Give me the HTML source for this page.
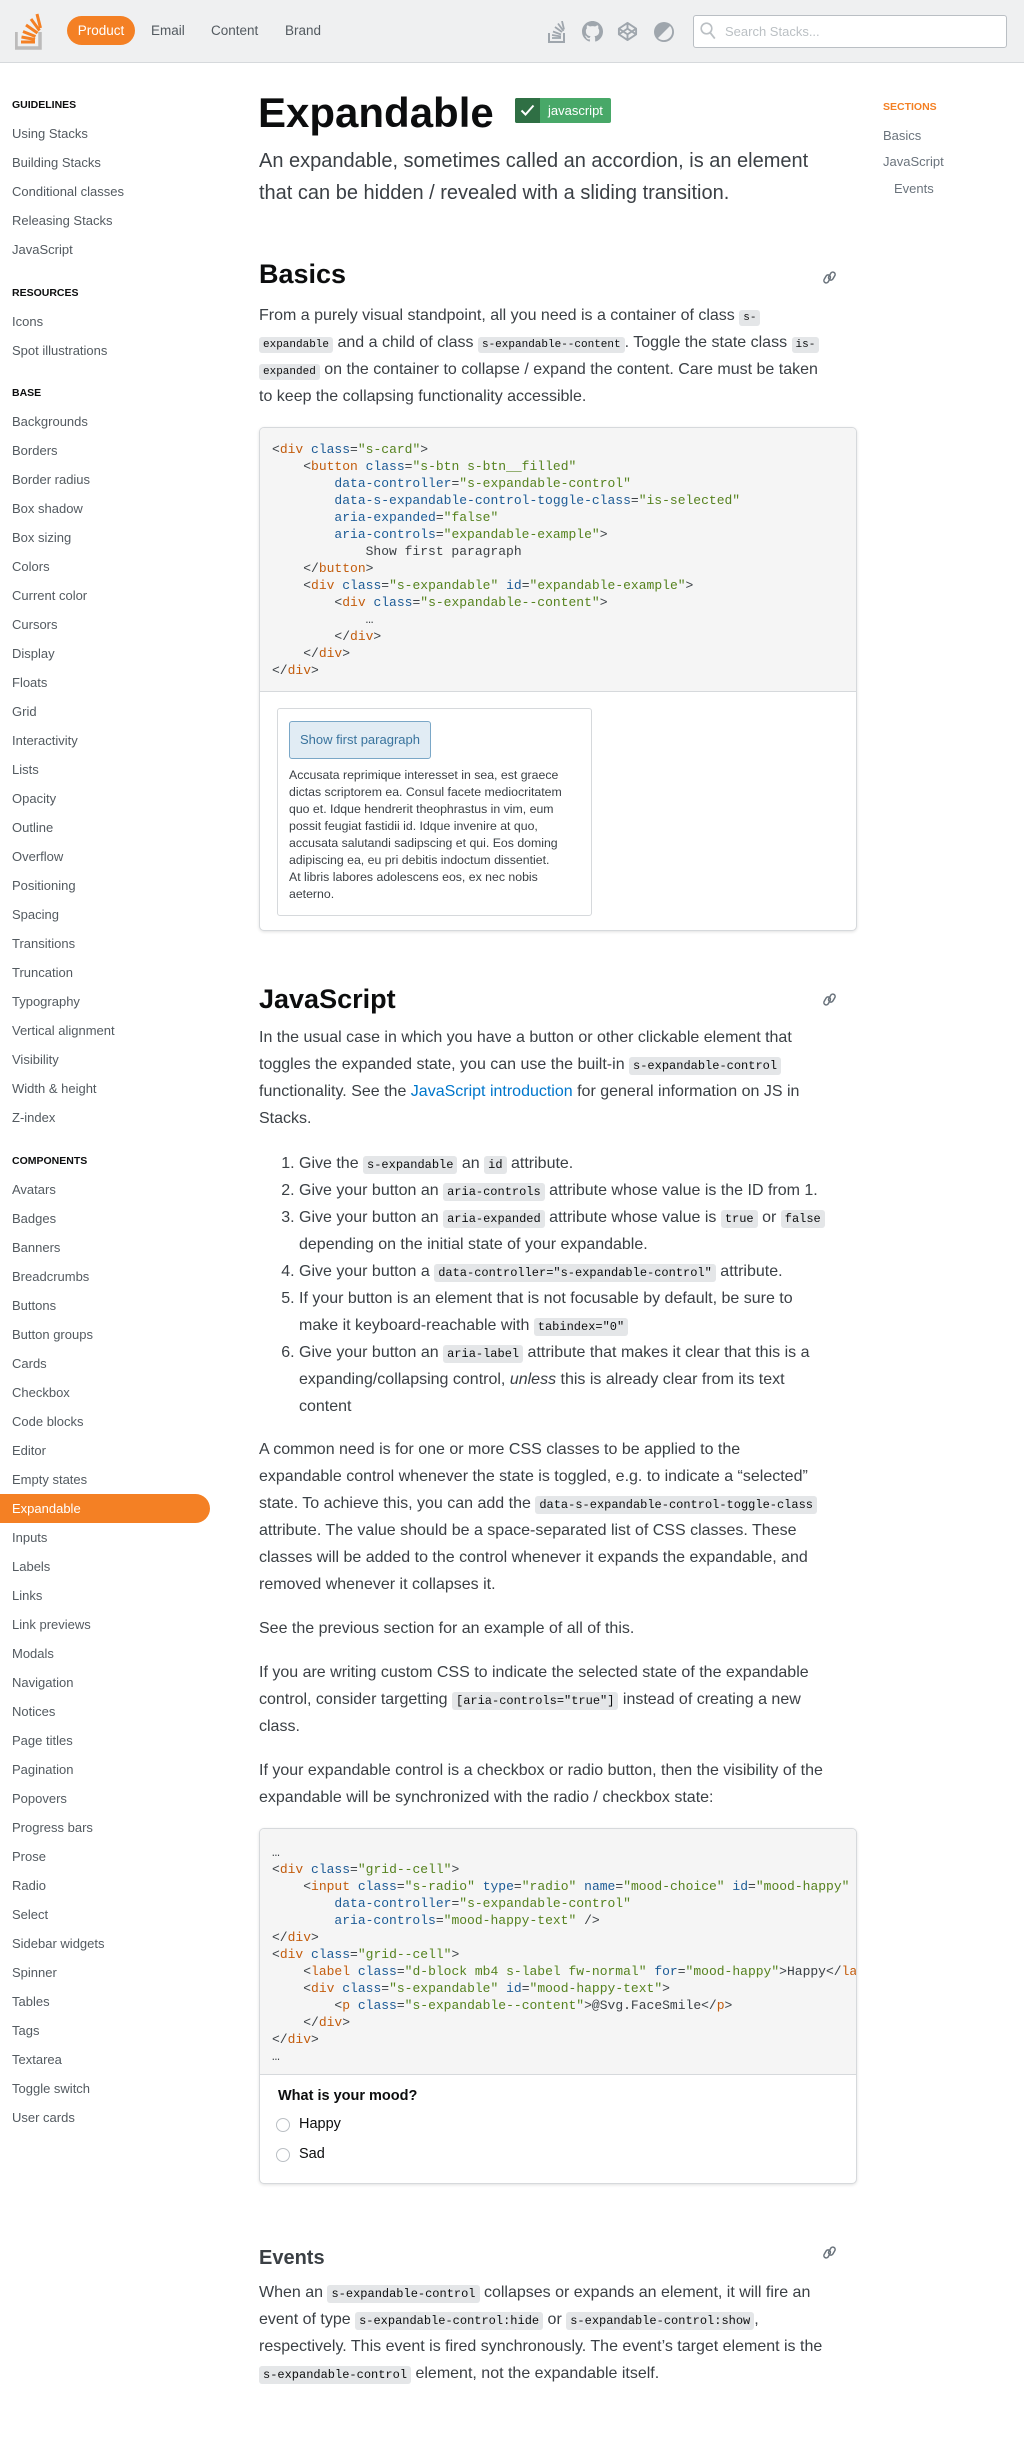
<!DOCTYPE html>
<html><head><meta charset="utf-8">
<style>
*{box-sizing:border-box;margin:0;padding:0}
body{width:1024px;height:2458px;position:relative;background:#fff;font-family:"Liberation Sans",Arial,sans-serif;color:#3b4045;overflow:hidden}
.hdr{position:absolute;left:0;top:0;width:1024px;height:63px;background:#eff0f1;border-bottom:1px solid #d6d9dc}
.abs{position:absolute}
.nav{position:absolute;top:16px;height:29px;line-height:29px;font-size:13.5px;color:#535a60}
.side{position:absolute;left:0;top:91px;width:230px}
.side .h{height:28px;line-height:28px;font-size:10.5px;font-weight:bold;color:#0c0d0e;padding-left:12px;margin-top:14.5px}
.side .h:first-child{margin-top:0}
.side .i{height:29px;line-height:29px;font-size:13px;color:#535a60;padding-left:12px}
.side .sel{background:#f48024;color:#fff;border-radius:0 15px 15px 0;width:210px}
p.b{position:absolute;left:259px;width:600px;font-size:16px;line-height:27px;color:#3b4045;white-space:nowrap}
code{font-family:"Liberation Mono","DejaVu Sans Mono",monospace;font-size:12px;line-height:1;background:#e4e6e8;padding:2px 4px;border-radius:3px;color:#0c0d0e}
h2{position:absolute;left:259px;font-size:27px;line-height:34px;font-weight:bold;color:#0c0d0e}
.card{position:absolute;left:259px;width:598px;border:1px solid #d6d9dc;border-radius:5px;box-shadow:0 1px 3px rgba(0,0,0,.12);overflow:hidden;background:#fff}
pre{font-family:"Liberation Mono","DejaVu Sans Mono",monospace;font-size:13px;line-height:17px;background:#f5f5f5;border-bottom:1px solid #d6d9dc;padding-left:12px;color:#3b4045;white-space:pre;overflow:hidden}
.t{color:#c35c0c}.a{color:#1c5b96}.s{color:#55821e}
ol{position:absolute;left:259px;width:600px;font-size:16px;line-height:27px;padding-left:40px;white-space:nowrap}
.link{position:absolute;left:822px;width:15px;height:15px}
</style></head><body>
<div class="hdr">
  <svg class="abs" style="left:15px;top:12px" width="32" height="38" viewBox="0 0 32 38">
    <path d="M1 20v16h24V20" fill="none" stroke="#bcbbbb" stroke-width="3.5"/>
    <path d="M6 30h14M6.5 25l13.5 2.5M8 19.5l12.5 5M11 13l11.5 8M16 7l8.5 11.5M22 2l3.5 14" stroke="#f48024" stroke-width="3" fill="none"/>
  </svg>
  <div class="abs" style="left:67px;top:16px;width:68px;height:29px;border-radius:15px;background:#f48024"></div>
  <div class="nav" style="left:67px;width:68px;text-align:center;color:#fff">Product</div>
  <div class="nav" style="left:151px">Email</div>
  <div class="nav" style="left:211px">Content</div>
  <div class="nav" style="left:285px">Brand</div>
  <svg class="abs" style="left:548px;top:21px" width="20" height="22" viewBox="0 0 20 22">
    <path d="M1 12v9h15v-9" fill="none" stroke="#9fa6ad" stroke-width="2"/>
    <path d="M4 17h9M4 14l9 1.5M5 10.5l8 3M7 6l7 5M10 2.5l5.5 7.5M14 0l2 8.5" stroke="#9fa6ad" stroke-width="1.8" fill="none"/>
  </svg>
  <svg class="abs" style="left:582px;top:21px" width="21" height="21" viewBox="0 0 16 16"><path fill="#9fa6ad" d="M8 0C3.58 0 0 3.58 0 8c0 3.54 2.29 6.53 5.47 7.59.4.07.55-.17.55-.38v-1.33c-2.23.48-2.7-1.07-2.7-1.07-.36-.92-.89-1.17-.89-1.17-.73-.5.06-.49.06-.49.8.06 1.23.83 1.23.83.72 1.23 1.88.87 2.34.67.07-.52.28-.87.51-1.07-1.78-.2-3.64-.89-3.64-3.95 0-.87.31-1.59.82-2.15-.08-.2-.36-1.02.08-2.12 0 0 .67-.21 2.2.82a7.6 7.6 0 0 1 4 0c1.53-1.04 2.2-.82 2.2-.82.44 1.1.16 1.92.08 2.12.51.56.82 1.27.82 2.15 0 3.07-1.87 3.75-3.65 3.95.29.25.54.73.54 1.48v2.2c0 .21.15.46.55.38A8.01 8.01 0 0 0 16 8c0-4.42-3.58-8-8-8z"/></svg>
  <svg class="abs" style="left:617px;top:21px" width="21" height="21" viewBox="0 0 22 22"><g fill="none" stroke="#9fa6ad" stroke-width="2" stroke-linejoin="round"><path d="M11 2l9 6v6l-9 6-9-6V8z"/><path d="M11 2v6M11 14v6M2 8l9 6 9-6M2 14l9-6 9 6"/></g></svg>
  <svg class="abs" style="left:653px;top:21px" width="22" height="22" viewBox="0 0 22 22"><circle cx="11" cy="11" r="10" fill="#9fa6ad"/><path d="M17 5A8.5 8.5 0 0 1 5 17z" fill="#eff0f1"/></svg>
  <div class="abs" style="left:693px;top:15px;width:314px;height:33px;background:#fff;border:1px solid #babfc4;border-radius:3px"></div>
  <svg class="abs" style="left:700px;top:22px" width="16" height="18" viewBox="0 0 16 18"><circle cx="6.5" cy="6.5" r="5.3" fill="none" stroke="#bbc0c4" stroke-width="1.6"/><path d="M10.3 10.8l4.5 5.8" stroke="#bbc0c4" stroke-width="1.8"/></svg>
  <div class="abs" style="left:725px;top:15px;line-height:33px;font-size:13px;color:#bbc0c4">Search Stacks...</div>
</div>

<div class="side">
<div class="h">GUIDELINES</div>
<div class="i">Using Stacks</div><div class="i">Building Stacks</div><div class="i">Conditional classes</div><div class="i">Releasing Stacks</div><div class="i">JavaScript</div>
<div class="h">RESOURCES</div>
<div class="i">Icons</div><div class="i">Spot illustrations</div>
<div class="h">BASE</div>
<div class="i">Backgrounds</div><div class="i">Borders</div><div class="i">Border radius</div><div class="i">Box shadow</div><div class="i">Box sizing</div><div class="i">Colors</div><div class="i">Current color</div><div class="i">Cursors</div><div class="i">Display</div><div class="i">Floats</div><div class="i">Grid</div><div class="i">Interactivity</div><div class="i">Lists</div><div class="i">Opacity</div><div class="i">Outline</div><div class="i">Overflow</div><div class="i">Positioning</div><div class="i">Spacing</div><div class="i">Transitions</div><div class="i">Truncation</div><div class="i">Typography</div><div class="i">Vertical alignment</div><div class="i">Visibility</div><div class="i">Width &amp; height</div><div class="i">Z-index</div>
<div class="h">COMPONENTS</div>
<div class="i">Avatars</div><div class="i">Badges</div><div class="i">Banners</div><div class="i">Breadcrumbs</div><div class="i">Buttons</div><div class="i">Button groups</div><div class="i">Cards</div><div class="i">Checkbox</div><div class="i">Code blocks</div><div class="i">Editor</div><div class="i">Empty states</div><div class="i sel">Expandable</div><div class="i">Inputs</div><div class="i">Labels</div><div class="i">Links</div><div class="i">Link previews</div><div class="i">Modals</div><div class="i">Navigation</div><div class="i">Notices</div><div class="i">Page titles</div><div class="i">Pagination</div><div class="i">Popovers</div><div class="i">Progress bars</div><div class="i">Prose</div><div class="i">Radio</div><div class="i">Select</div><div class="i">Sidebar widgets</div><div class="i">Spinner</div><div class="i">Tables</div><div class="i">Tags</div><div class="i">Textarea</div><div class="i">Toggle switch</div><div class="i">User cards</div>
</div>

<div class="abs" style="left:883px;top:101px;font-size:10.5px;font-weight:bold;color:#f48024">SECTIONS</div>
<div class="abs" style="left:883px;top:128px;font-size:13px;color:#6a737c">Basics</div>
<div class="abs" style="left:883px;top:154px;font-size:13px;color:#6a737c">JavaScript</div>
<div class="abs" style="left:894px;top:181px;font-size:13px;color:#6a737c">Events</div>

<div class="abs" style="left:258px;top:88px;font-size:42px;line-height:50px;font-weight:bold;color:#0c0d0e">Expandable</div>
<div class="abs" style="left:515px;top:98px;width:96px;height:25px;background:#48a868;border-radius:2px;overflow:hidden">
  <div class="abs" style="left:0;top:0;width:25px;height:25px;background:#2f6f44"></div>
  <svg class="abs" style="left:5px;top:6px" width="15" height="13" viewBox="0 0 15 13"><path d="M1.5 6.5l4 4 8-9" fill="none" stroke="#fff" stroke-width="2"/></svg>
  <div class="abs" style="left:33px;top:0;line-height:25px;font-size:13px;color:#fff">javascript</div>
</div>
<p class="b" style="top:145px;font-size:20px;line-height:32px">An expandable, sometimes called an accordion, is an element<br>that can be hidden / revealed with a sliding transition.</p>

<h2 style="top:257px">Basics</h2>
<svg class="link" style="top:270px" viewBox="0 0 16 16"><g fill="none" stroke="#6a737c" stroke-width="1.6"><rect x="3" y="5" width="5" height="9" rx="2.5" transform="rotate(30 5.5 9.5)"/><rect x="8" y="2" width="5" height="9" rx="2.5" transform="rotate(30 10.5 6.5)"/></g></svg>
<p class="b" style="top:301.5px">From a purely visual standpoint, all you need is a container of class <code style="font-size:11px">s-</code><br><code style="font-size:11px">expandable</code> and a child of class <code style="font-size:11px">s-expandable--content</code>. Toggle the state class <code style="font-size:11px">is-</code><br><code style="font-size:11px">expanded</code> on the container to collapse / expand the content. Care must be taken<br>to keep the collapsing functionality accessible.</p>

<div class="card" style="top:427px;height:504px">
<pre style="height:264px;padding-top:12.5px">&lt;<span class="t">div</span> <span class="a">class</span>=<span class="s">"s-card"</span>&gt;
    &lt;<span class="t">button</span> <span class="a">class</span>=<span class="s">"s-btn s-btn__filled"</span>
        <span class="a">data-controller</span>=<span class="s">"s-expandable-control"</span>
        <span class="a">data-s-expandable-control-toggle-class</span>=<span class="s">"is-selected"</span>
        <span class="a">aria-expanded</span>=<span class="s">"false"</span>
        <span class="a">aria-controls</span>=<span class="s">"expandable-example"</span>&gt;
            Show first paragraph
    &lt;/<span class="t">button</span>&gt;
    &lt;<span class="t">div</span> <span class="a">class</span>=<span class="s">"s-expandable"</span> <span class="a">id</span>=<span class="s">"expandable-example"</span>&gt;
        &lt;<span class="t">div</span> <span class="a">class</span>=<span class="s">"s-expandable--content"</span>&gt;
            …
        &lt;/<span class="t">div</span>&gt;
    &lt;/<span class="t">div</span>&gt;
&lt;/<span class="t">div</span>&gt;</pre>
<div class="abs" style="left:17px;top:280px;width:315px;height:208px;border:1px solid #d6d9dc;border-radius:3px">
  <div class="abs" style="left:11px;top:12px;width:142px;height:38px;background:#e1ecf4;border:1px solid #7aa7c7;border-radius:3px;line-height:36px;text-align:center;font-size:13px;color:#39739d">Show first paragraph</div>
  <div class="abs" style="left:11px;top:58px;font-size:12.3px;line-height:17px;color:#3b4045;white-space:nowrap">Accusata reprimique interesset in sea, est graece<br>dictas scriptorem ea. Consul facete mediocritatem<br>quo et. Idque hendrerit theophrastus in vim, eum<br>possit feugiat fastidii id. Idque invenire at quo,<br>accusata salutandi sadipscing et qui. Eos doming<br>adipiscing ea, eu pri debitis indoctum dissentiet.<br>At libris labores adolescens eos, ex nec nobis<br>aeterno.</div>
</div>
</div>

<h2 style="top:982px">JavaScript</h2>
<svg class="link" style="top:992px" viewBox="0 0 16 16"><g fill="none" stroke="#6a737c" stroke-width="1.6"><rect x="3" y="5" width="5" height="9" rx="2.5" transform="rotate(30 5.5 9.5)"/><rect x="8" y="2" width="5" height="9" rx="2.5" transform="rotate(30 10.5 6.5)"/></g></svg>
<p class="b" style="top:1023.5px">In the usual case in which you have a button or other clickable element that<br>toggles the expanded state, you can use the built-in <code>s-expandable-control</code><br>functionality. See the <span style="color:#0077cc">JavaScript introduction</span> for general information on JS in<br>Stacks.</p>
<ol style="top:1149.5px">
<li>Give the <code>s-expandable</code> an <code>id</code> attribute.</li>
<li>Give your button an <code>aria-controls</code> attribute whose value is the ID from 1.</li>
<li>Give your button an <code>aria-expanded</code> attribute whose value is <code>true</code> or <code>false</code><br>depending on the initial state of your expandable.</li>
<li>Give your button a <code>data-controller="s-expandable-control"</code> attribute.</li>
<li>If your button is an element that is not focusable by default, be sure to<br>make it keyboard-reachable with <code>tabindex="0"</code></li>
<li>Give your button an <code>aria-label</code> attribute that makes it clear that this is a<br>expanding/collapsing control, <i>unless</i> this is already clear from its text<br>content</li>
</ol>
<p class="b" style="top:1435.5px">A common need is for one or more CSS classes to be applied to the<br>expandable control whenever the state is toggled, e.g. to indicate a “selected”<br>state. To achieve this, you can add the <code>data-s-expandable-control-toggle-class</code><br>attribute. The value should be a space-separated list of CSS classes. These<br>classes will be added to the control whenever it expands the expandable, and<br>removed whenever it collapses it.</p>
<p class="b" style="top:1614.5px">See the previous section for an example of all of this.</p>
<p class="b" style="top:1658.5px">If you are writing custom CSS to indicate the selected state of the expandable<br>control, consider targetting <code>[aria-controls="true"]</code> instead of creating a new<br>class.</p>
<p class="b" style="top:1756.5px">If your expandable control is a checkbox or radio button, then the visibility of the<br>expandable will be synchronized with the radio / checkbox state:</p>

<div class="card" style="top:1828px;height:356px">
<pre style="height:246px;padding-top:14.5px">…
&lt;<span class="t">div</span> <span class="a">class</span>=<span class="s">"grid--cell"</span>&gt;
    &lt;<span class="t">input</span> <span class="a">class</span>=<span class="s">"s-radio"</span> <span class="a">type</span>=<span class="s">"radio"</span> <span class="a">name</span>=<span class="s">"mood-choice"</span> <span class="a">id</span>=<span class="s">"mood-happy"</span>
        <span class="a">data-controller</span>=<span class="s">"s-expandable-control"</span>
        <span class="a">aria-controls</span>=<span class="s">"mood-happy-text"</span> /&gt;
&lt;/<span class="t">div</span>&gt;
&lt;<span class="t">div</span> <span class="a">class</span>=<span class="s">"grid--cell"</span>&gt;
    &lt;<span class="t">label</span> <span class="a">class</span>=<span class="s">"d-block mb4 s-label fw-normal"</span> <span class="a">for</span>=<span class="s">"mood-happy"</span>&gt;Happy&lt;/<span class="t">label</span>&gt;
    &lt;<span class="t">div</span> <span class="a">class</span>=<span class="s">"s-expandable"</span> <span class="a">id</span>=<span class="s">"mood-happy-text"</span>&gt;
        &lt;<span class="t">p</span> <span class="a">class</span>=<span class="s">"s-expandable--content"</span>&gt;@Svg.FaceSmile&lt;/<span class="t">p</span>&gt;
    &lt;/<span class="t">div</span>&gt;
&lt;/<span class="t">div</span>&gt;
…</pre>
<div class="abs" style="left:18px;top:259px;font-size:14.5px;font-weight:bold;color:#0c0d0e">What is your mood?</div>
<div class="abs" style="left:16px;top:289px;width:14px;height:14px;border:1px solid #babfc4;border-radius:50%"></div>
<div class="abs" style="left:39px;top:287px;font-size:14.5px;color:#0c0d0e">Happy</div>
<div class="abs" style="left:16px;top:319px;width:14px;height:14px;border:1px solid #babfc4;border-radius:50%"></div>
<div class="abs" style="left:39px;top:317px;font-size:14.5px;color:#0c0d0e">Sad</div>
</div>

<div class="abs" style="left:259px;top:2245px;font-size:20px;line-height:26px;font-weight:bold;color:#3b4045">Events</div>
<svg class="link" style="top:2245px" viewBox="0 0 16 16"><g fill="none" stroke="#6a737c" stroke-width="1.6"><rect x="3" y="5" width="5" height="9" rx="2.5" transform="rotate(30 5.5 9.5)"/><rect x="8" y="2" width="5" height="9" rx="2.5" transform="rotate(30 10.5 6.5)"/></g></svg>
<p class="b" style="top:2278.5px">When an <code>s-expandable-control</code> collapses or expands an element, it will fire an<br>event of type <code>s-expandable-control:hide</code> or <code>s-expandable-control:show</code>,<br>respectively. This event is fired synchronously. The event’s target element is the<br><code>s-expandable-control</code> element, not the expandable itself.</p>
</body></html>
